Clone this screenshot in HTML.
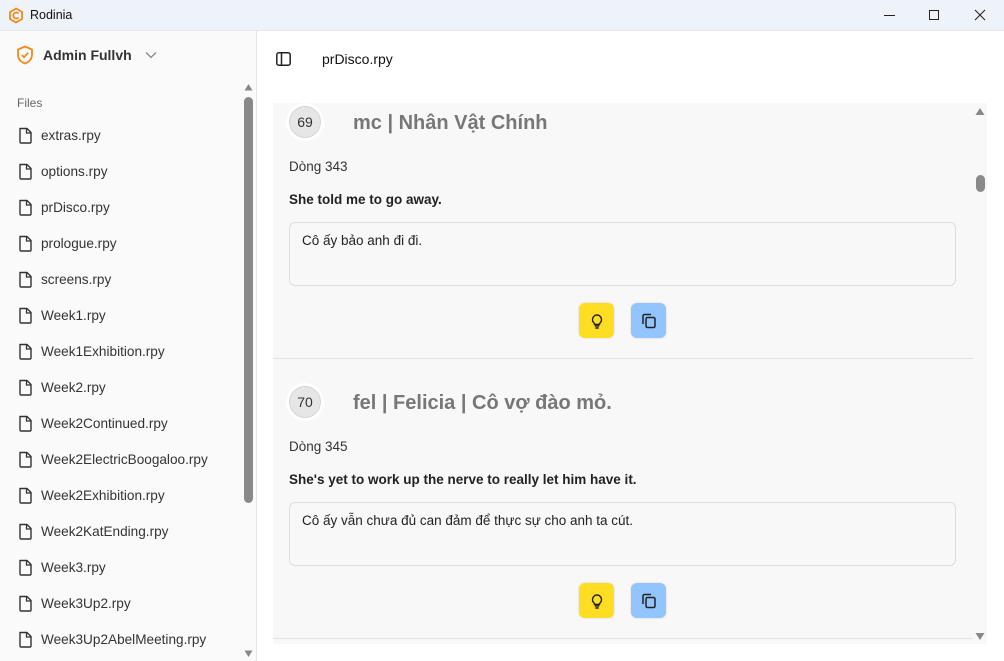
<!DOCTYPE html>
<html><head><meta charset="utf-8"><style>
*{box-sizing:border-box;margin:0;padding:0}
body{width:1004px;height:661px;overflow:hidden;background:#fff;font-family:"Liberation Sans","Noto Sans CJK SC",sans-serif;position:relative;color:#222}
.a{position:absolute}
.title{left:0;top:0;width:1004px;height:31px;background:#eef3fa;border-bottom:1px solid #e4e8ee}
.side{left:0;top:31px;width:257px;height:630px;background:#fafafa;border-right:1px solid #e6e6e6}
.item{position:absolute;left:18px;font-size:13.6px;color:#333;display:flex;align-items:center;gap:8px}
.panel{left:273px;top:103px;width:714px;height:541px;background:#f8f8f8;overflow:hidden}
.badge{width:38px;height:38px;border-radius:50%;background:#fff;display:flex;align-items:center;justify-content:center}
.badge span{width:32px;height:32px;border-radius:50%;background:#e6e6e6;border:1px solid #d6d6d6;display:flex;align-items:center;justify-content:center;font-size:14px;color:#333}
.name{font-size:20px;font-weight:bold;color:#777}
.ta{width:667px;height:64px;border:1px solid #ddd;border-radius:6px;background:#f8f8f8;font-size:13.5px;padding:10px 12px}
.btn{width:35px;height:35px;border-radius:6px;display:flex;align-items:center;justify-content:center;box-shadow:0 0 2px rgba(0,0,0,.15)}
</style></head><body>
<div class="a title">
 <svg class="a" style="left:8px;top:7px" width="16" height="17" viewBox="0 0 16 17"><path d="M8 1.5L14 5v7L8 15.5 2 12V5z" fill="none" stroke="#f08a1c" stroke-width="1.8"/><path d="M10.5 6.5A3 3 0 1 0 10.5 10.5" fill="none" stroke="#f08a1c" stroke-width="1.8"/></svg>
 <div class="a" style="left:30px;top:8px;font-size:12.5px;color:#111">Rodinia</div>
 <div class="a" style="left:884px;top:15px;width:11px;height:1px;background:#222"></div>
 <div class="a" style="left:929px;top:10px;width:10px;height:10px;border:1px solid #222"></div>
 <svg class="a" style="left:974px;top:9px" width="12" height="12"><path d="M1 1L11 11M11 1L1 11" stroke="#222" stroke-width="1.1"/></svg>
</div>
<div class="a side">
 <svg class="a" style="left:16px;top:14px" width="18" height="20" viewBox="0 0 18 20"><path d="M9 1.5L16 4.5v5c0 4.5-3 7.5-7 9-4-1.5-7-4.5-7-9v-5z" fill="none" stroke="#f08a1c" stroke-width="1.8" stroke-linejoin="round"/><path d="M5.8 10l2.2 2.2 4.2-4.4" fill="none" stroke="#f08a1c" stroke-width="1.8"/></svg>
 <div class="a" style="left:43px;top:16px;font-size:14px;font-weight:bold;color:#333">Admin Fullvh</div>
 <svg class="a" style="left:145px;top:20px" width="12" height="8"><path d="M1 1.5l5 5 5-5" fill="none" stroke="#888" stroke-width="1.3"/></svg>
 <div class="a" style="left:17px;top:65px;font-size:12px;color:#666">Files</div>
 <div class="a" style="left:243px;top:52px;width:11px;height:575px">
  <svg class="a" style="left:1px;top:0" width="9" height="8"><path d="M0.5 7.5L4.5 1 8.5 7.5z" fill="#888"/></svg>
  <div class="a" style="left:1px;top:14px;width:9px;height:406px;border-radius:5px;background:#8a8a8a"></div>
  <svg class="a" style="left:1px;top:567px" width="9" height="8"><path d="M0.5 0.5L4.5 7 8.5 0.5z" fill="#888"/></svg>
 </div>
</div>
<div id="files"></div>
<svg class="a" style="left:276px;top:52px" width="15" height="14"><rect x="0.8" y="0.8" width="13.4" height="12.4" rx="2" fill="none" stroke="#222" stroke-width="1.5"/><path d="M5.5 1v12" stroke="#222" stroke-width="1.5"/></svg>
<div class="a" style="left:322px;top:51px;font-size:14px;color:#111">prDisco.rpy</div>
<div class="a panel">
 <div id="cards"></div>
</div>
<svg class="a" style="left:975px;top:107px" width="10" height="9"><path d="M0.5 8L5 1 9.5 8z" fill="#888"/></svg>
<div class="a" style="left:976px;top:175px;width:9px;height:17px;border-radius:5px;background:#8a8a8a"></div>
<svg class="a" style="left:975px;top:632px" width="10" height="9"><path d="M0.5 1L5 8 9.5 1z" fill="#888"/></svg>
<script>
var f=["extras.rpy","options.rpy","prDisco.rpy","prologue.rpy","screens.rpy","Week1.rpy","Week1Exhibition.rpy","Week2.rpy","Week2Continued.rpy","Week2ElectricBoogaloo.rpy","Week2Exhibition.rpy","Week2KatEnding.rpy","Week3.rpy","Week3Up2.rpy","Week3Up2AbelMeeting.rpy"];
var h="";f.forEach(function(n,i){h+='<div class="item" style="top:'+(127+i*36)+'px"><svg width="15" height="17" viewBox="0 0 15 17"><path d="M2 1.5h7l4 4v9.5a1 1 0 0 1-1 1H3a1 1 0 0 1-1-1z" fill="none" stroke="#333" stroke-width="1.4" stroke-linejoin="round"/><path d="M8.5 1.5v4.5h4.5" fill="none" stroke="#333" stroke-width="1.3"/></svg><span>'+n+'</span></div>';});
document.getElementById("files").innerHTML=h;
var c=[["69","mc | Nhân Vật Chính","Dòng 343","She told me to go away.","Cô ấy bảo anh đi đi."],["70","fel | Felicia | Cô vợ đào mỏ.","Dòng 345","She's yet to work up the nerve to really let him have it.","Cô ấy vẫn chưa đủ can đảm để thực sự cho anh ta cút."]];
var bulb='<svg width="14" height="16" viewBox="0 0 14 16"><path d="M4.5 10.5C3 9.3 2.5 8 2.5 6.5a4.5 4.5 0 0 1 9 0c0 1.5-.5 2.8-2 4v1h-5z" fill="none" stroke="#222" stroke-width="1.4"/><path d="M4.8 13h4.4M5.3 15h3.4" stroke="#222" stroke-width="1.4"/></svg>';
var copy='<svg width="16" height="16" viewBox="0 0 16 16"><path d="M2 11V3a1.5 1.5 0 0 1 1.5-1.5H10" fill="none" stroke="#222" stroke-width="1.5"/><rect x="5" y="4.5" width="9" height="10" rx="1.5" fill="none" stroke="#222" stroke-width="1.5"/></svg>';
var s="";c.forEach(function(d,i){var t=i*280;
s+='<div class="a badge" style="left:13px;top:'+(t)+'px"><span>'+d[0]+'</span></div>';
s+='<div class="a name" style="left:80px;top:'+(t+9)+'px">'+d[1]+'</div>';
s+='<div class="a" style="left:16px;top:'+(t+56)+'px;font-size:13.5px;color:#333">'+d[2]+'</div>';
s+='<div class="a" style="left:16px;top:'+(t+89)+'px;font-size:13.5px;font-weight:bold;color:#222">'+d[3]+'</div>';
s+='<div class="a ta" style="left:16px;top:'+(t+119)+'px">'+d[4]+'</div>';
s+='<div class="a btn" style="left:306px;top:'+(t+200)+'px;background:#fedd22">'+bulb+'</div>';
s+='<div class="a btn" style="left:358px;top:'+(t+200)+'px;background:#92c5fd">'+copy+'</div>';
s+='<div class="a" style="left:0;top:'+(t+255)+'px;width:700px;height:1px;background:#e2e2e2"></div>';
});
document.getElementById("cards").innerHTML=s;
</script>
</body></html>
